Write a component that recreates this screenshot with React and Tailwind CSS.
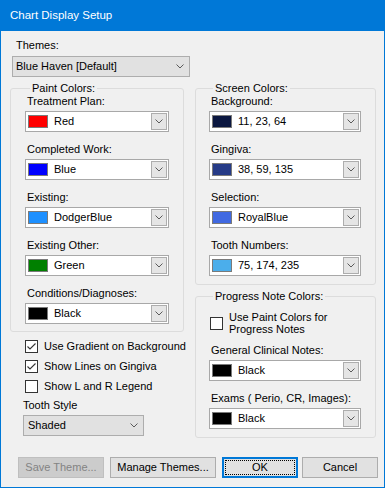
import React from 'react';

const FONT = { fontFamily: '"Liberation Sans", Arial, sans-serif' };

function Chevron() {
    return (
        <svg width="8" height="5" viewBox="0 0 8 5">
            <path d="M0.5 0.5 L4 4 L7.5 0.5" stroke="#5a5a5a" strokeWidth="1" fill="none" />
        </svg>
    );
}

function ColorCombo({ color, text, width }) {
    return (
        <div className={`relative h-[21px] ${width} bg-white border border-[#a8a8a8] flex items-center`}>
            <div className="ml-[2px] w-[20px] h-[13px] border border-[#7a7a7a]" style={{ backgroundColor: color }} />
            <span className="ml-[6px] leading-[13px]">{text}</span>
            <div className="absolute right-[1px] top-[1px] w-[16px] h-[17px] bg-[#e5e5e5] border border-[#adadad] flex items-center justify-center">
                <Chevron />
            </div>
        </div>
    );
}

function Field({ label, color, text, width, first }) {
    return (
        <div className={first ? '' : 'mt-[11px]'}>
            <div className="ml-[2px] leading-[13px] h-[13px] mb-[3px] whitespace-nowrap">{label}</div>
            <ColorCombo color={color} text={text} width={width} />
        </div>
    );
}

function CheckBox({ checked }) {
    return (
        <div className="w-[13px] h-[13px] shrink-0 bg-white border border-[#333333] flex items-center justify-center">
            {checked && (
                <svg width="11" height="11" viewBox="0 0 11 11">
                    <path d="M1.5 5.5 L4 8 L9.5 2.5" stroke="#333333" strokeWidth="1.1" fill="none" />
                </svg>
            )}
        </div>
    );
}

export default function App() {
    const paint = [
        { label: 'Treatment Plan:', color: '#ff0000', text: 'Red' },
        { label: 'Completed Work:', color: '#0000ff', text: 'Blue' },
        { label: 'Existing:', color: '#1e90ff', text: 'DodgerBlue' },
        { label: 'Existing Other:', color: '#008000', text: 'Green' },
        { label: 'Conditions/Diagnoses:', color: '#000000', text: 'Black' },
    ];
    const screen = [
        { label: 'Background:', color: 'rgb(11,23,64)', text: '11, 23, 64' },
        { label: 'Gingiva:', color: 'rgb(38,59,135)', text: '38, 59, 135' },
        { label: 'Selection:', color: '#4169e1', text: 'RoyalBlue' },
        { label: 'Tooth Numbers:', color: 'rgb(75,174,235)', text: '75, 174, 235' },
    ];

    return (
        <div className="w-[385px] h-[488px] bg-[#0078d7] px-[1px] pb-[1px] flex flex-col text-[11px] text-black" style={FONT}>
            <div className="h-[31px] shrink-0 flex items-center pl-[9px] text-white text-[11.5px]">
                Chart Display Setup
            </div>
            <div className="flex-1 bg-[#f0f0f0] flex flex-col">
                <div className="mt-[8px] ml-[15px] leading-[13px] h-[13px]">Themes:</div>
                <div className="mt-[4px] ml-[11px] w-[178px] h-[21px] bg-[#e1e1e1] border border-[#adadad] flex items-center justify-between pl-[3px] pr-[5px]">
                    <span className="leading-[13px]">Blue Haven [Default]</span>
                    <Chevron />
                </div>

                <div className="flex ml-[9px] mt-[5px] gap-[11px]">
                    {/* colonne gauche */}
                    <div className="w-[174px] flex flex-col">
                        <fieldset className="border border-[#dcdcdc] rounded-[3px] pl-[14px] pb-[7px]">
                            <legend className="ml-[5px] px-[2px] leading-[13px]">Paint Colors:</legend>
                            {paint.map((p, i) => (
                                <Field key={p.label} {...p} width="w-[144px]" first={i === 0} />
                            ))}
                        </fieldset>
                        <div className="mt-[8px] pl-[15px] flex flex-col gap-[7px] whitespace-nowrap">
                            <div className="h-[13px] flex items-center">
                                <CheckBox checked />
                                <span className="ml-[6px] leading-[13px]">Use Gradient on Background</span>
                            </div>
                            <div className="h-[13px] flex items-center">
                                <CheckBox checked />
                                <span className="ml-[6px] leading-[13px]">Show Lines on Gingiva</span>
                            </div>
                            <div className="h-[13px] flex items-center">
                                <CheckBox />
                                <span className="ml-[6px] leading-[13px]">Show L and R Legend</span>
                            </div>
                        </div>
                        <div className="mt-[6px] ml-[13px] leading-[13px] h-[13px]">Tooth Style</div>
                        <div className="mt-[3px] ml-[13px] w-[121px] h-[21px] bg-[#e1e1e1] border border-[#adadad] flex items-center justify-between pl-[4px] pr-[5px]">
                            <span className="leading-[13px]">Shaded</span>
                            <Chevron />
                        </div>
                    </div>

                    {/* colonne droite */}
                    <div className="w-[181px] flex flex-col">
                        <fieldset className="border border-[#dcdcdc] rounded-[3px] pl-[13px] pb-[8px]">
                            <legend className="ml-[4px] px-[2px] leading-[13px]">Screen Colors:</legend>
                            {screen.map((s, i) => (
                                <Field key={s.label} {...s} width="w-[152px]" first={i === 0} />
                            ))}
                        </fieldset>
                        <fieldset className="mt-[5px] border border-[#dcdcdc] rounded-[3px] pl-[13px] pb-[8px]">
                            <legend className="ml-[4px] px-[2px] leading-[13px]">Progress Note Colors:</legend>
                            <div className="mt-[8px] pl-[1px] flex items-center">
                                <CheckBox />
                                <span className="ml-[6px] leading-[12px]">Use Paint Colors for<br />Progress Notes</span>
                            </div>
                            <div className="mt-[9px]">
                                <div className="ml-[2px] leading-[13px] h-[13px] mb-[3px]">General Clinical Notes:</div>
                                <ColorCombo color="#000000" text="Black" width="w-[152px]" />
                            </div>
                            <Field label="Exams ( Perio, CR, Images):" color="#000000" text="Black" width="w-[152px]" />
                        </fieldset>
                    </div>
                </div>

                <div className="mt-auto mb-[9px] ml-[17px] flex">
                    <button className="w-[86px] h-[21px] bg-[#cccccc] border border-[#bfbfbf] text-[#838383] leading-[13px]">
                        Save Theme...
                    </button>
                    <button className="ml-[6px] w-[106px] h-[21px] bg-[#e1e1e1] border border-[#adadad] leading-[13px]">
                        Manage Themes...
                    </button>
                    <button className="ml-[6px] w-[76px] h-[21px] bg-[#e1e1e1] border-2 border-[#0078d7] p-[1px]">
                        <div className="w-full h-full border border-dotted border-black flex items-center justify-center leading-[13px]">
                            OK
                        </div>
                    </button>
                    <button className="ml-[4px] w-[76px] h-[21px] bg-[#e1e1e1] border border-[#adadad] leading-[13px]">
                        Cancel
                    </button>
                </div>
            </div>
        </div>
    );
}
